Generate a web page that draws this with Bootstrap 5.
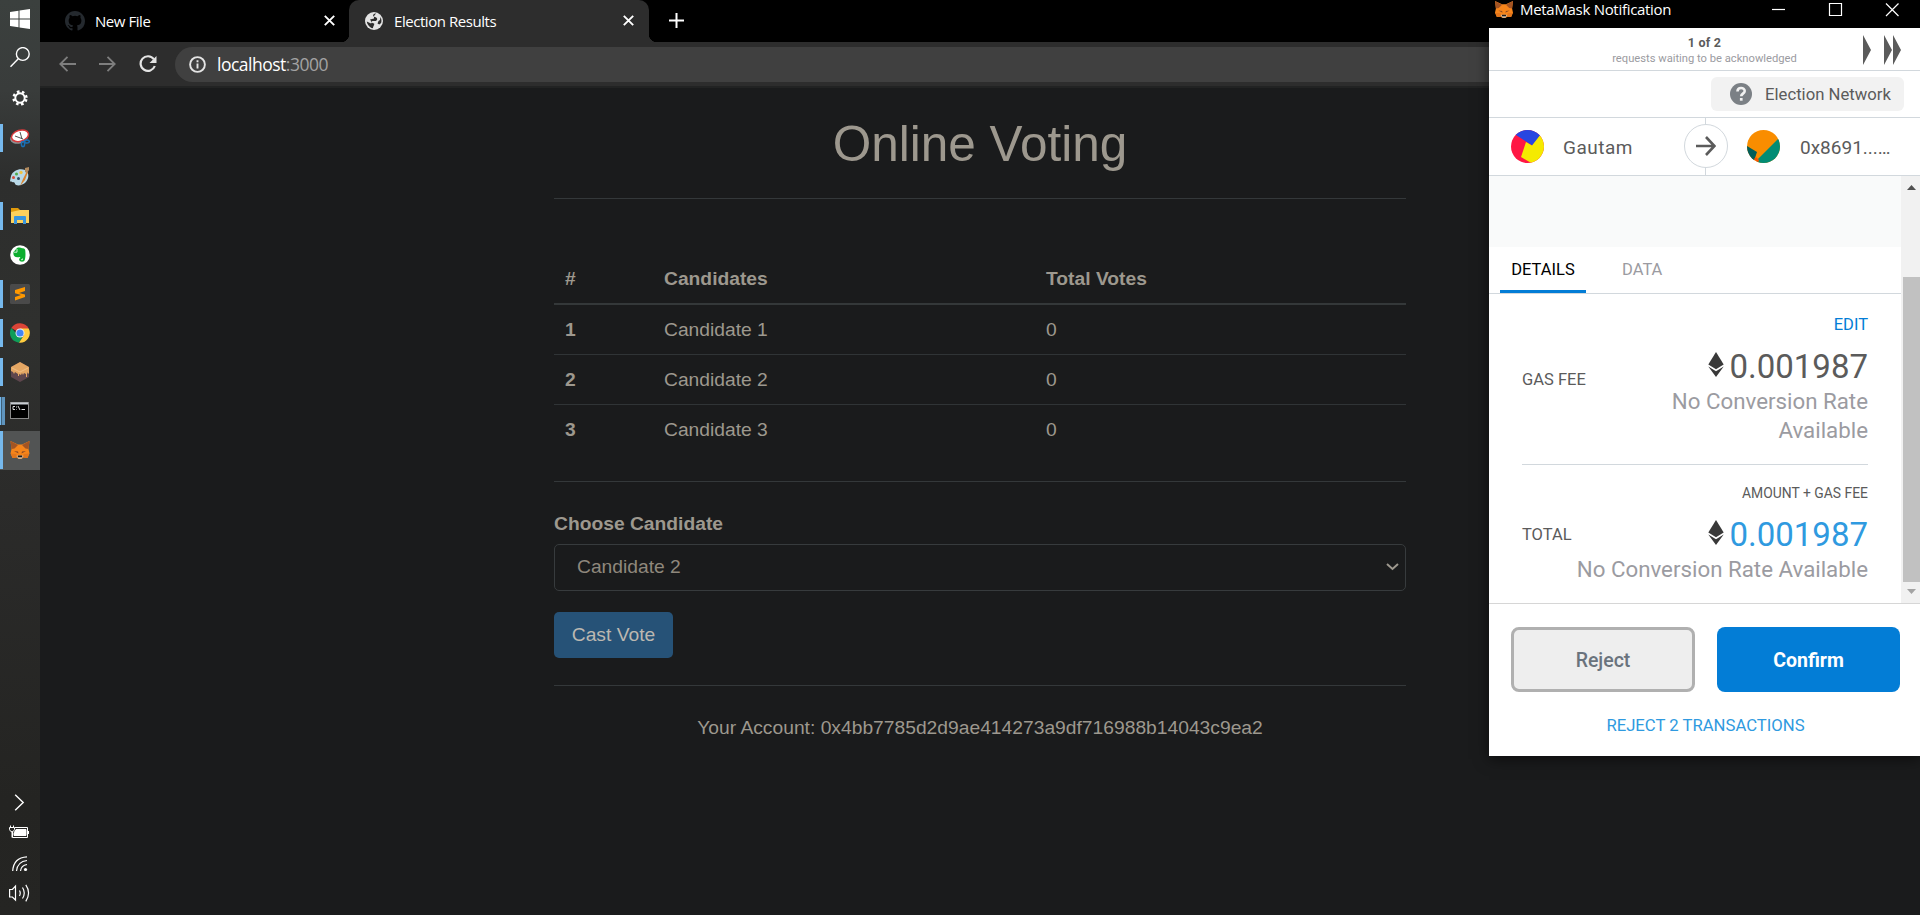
<!DOCTYPE html>
<html lang="en">
<head>
<meta charset="utf-8">
<meta name="viewport" content="width=device-width, initial-scale=1">
<title>Election Results</title>
<link href="https://cdn.jsdelivr.net/npm/bootstrap@5.3.0/dist/css/bootstrap.min.css" rel="stylesheet">
<style>
body{background:#1a1b1c;height:915px;overflow:hidden;font-family:"Liberation Sans",Arial,sans-serif}
svg{display:block;flex:none}
/* taskbar */
.taskbar{width:40px;height:915px;padding:2px 0 8px;background:linear-gradient(#3b403e 0,#393c3b 90px,#2d2e2d 180px,#2f302e 330px,#2b2b2a 500px,#242422 800px,#252523)}
.slot{height:39px;flex:none}
.slot.run::before{content:"";position:absolute;left:0;top:5px;width:3px;height:28px;background:#76b9ed}
.slot.run.multi::after{content:"";position:absolute;left:1px;top:5px;width:4px;height:28px;background:#5f94bd;border-left:1px solid #3e6079}
.slot.run.multi::before{width:1px}
.slot.live{background:#525454}
.slot.live::before{top:0!important;height:38px!important}
/* browser */
.ui{font-family:"Open Sans","Noto Sans",sans-serif;color:#fff}
.tabstrip{height:42px;background:#000}
.tab-item{height:42px;font-size:15px;line-height:40px;letter-spacing:-.45px;padding-bottom:1px}
.tab-on{background:#2d2d2d;border-radius:10px 10px 0 0}
.tab-on::before,.tab-on::after{content:"";position:absolute;bottom:0;width:8px;height:8px}
.tab-on::before{left:-8px;background:radial-gradient(circle at 0 0,transparent 8px,#2d2d2d 8.5px)}
.tab-on::after{right:-8px;background:radial-gradient(circle at 100% 0,transparent 8px,#2d2d2d 8.5px)}
.toolbar{height:46px;background:#2d2d2d;border-bottom:2px solid #222323}
.address{height:35px;background:#404040;border-radius:18px 0 0 18px;font-size:17.5px;line-height:35px;letter-spacing:-.5px}
.dim{color:#a3a3a3}
/* page */
.sheet{width:852px;margin-left:514px;color:#9d988e;font-size:19.25px}
.sheet h1{font-size:49.5px;line-height:54px;margin:29px 0 27px;font-weight:400}
.rule{height:1px;background:#34383a}
.votes{--bs-table-bg:transparent;--bs-table-color:#9d988e;color:#9d988e;border-color:#303436;line-height:27px;margin:53px 0 26px}
.votes th,.votes td{padding:11px 10px 11px 11px;border-bottom:1px solid #303436;height:50px}
.votes thead th{border-bottom:2px solid #343839;height:52px}
.votes tbody tr:last-child>*{border:0}
.pick{height:47px;border:1px solid #373b3d;border-radius:5px;color:#8f887c;padding:0 6px 0 22px}
.cast{height:46px;width:119px;background:#265277;border:0;border-radius:5px;color:#bcb8b1;font-size:19.25px;padding:0;line-height:46px}
/* wallet popup */
.wallet{left:1489px;top:0;width:431px;height:756px;background:#fff;font-family:Roboto,sans-serif;color:#5b5b5b;box-shadow:0 3px 14px rgba(0,0,0,.55)}
.w-title{height:28px;background:#000;font-size:15px;line-height:19px;letter-spacing:-.3px}
.w-line{border-bottom:1px solid #d2d8dd}
.w-queue{height:43px}
.w-net{height:47px}
.net-pill{width:193px;height:34px;background:#f2f2f2;border-radius:6px;font-size:16.7px;line-height:36px}
.w-route{height:58px;font-size:19px}
.w-arrow{left:195px;top:6px;width:44px;height:44px;border:1px solid #d2d8dd;border-radius:50%;background:#fff}
.w-split{left:216px;top:0;width:1px;height:57px;background:#d2d8dd}
.w-body{height:427px}
.w-scroll{width:19px;background:#f1f1f1}
.w-thumb{width:17px;height:305px;background:#c1c1c1}
.w-hero{height:71px;background:#f9fafa}
.w-tabs{height:47px;font-size:16.5px;line-height:45px}
.w-tab-on{width:86px;height:46px;border-bottom:3px solid #037dd6;color:#000}
.lab{font-size:16.5px}
.amount{font-size:33px;line-height:40px}
.muted-rate{font-size:22.3px;line-height:29px;color:#9b9ba1}
.blue{color:#037dd6}.sky{color:#2f9ae0}
.w-btn{height:65px;border-radius:8px;font-size:19.5px;font-weight:500;width:184px}
</style>
</head>
<body>
<div class="d-flex">
  <aside class="taskbar d-flex flex-column justify-content-between">
    <div>
      <div class="slot position-relative" style="padding:7px 0 0 10px"><svg width="20" height="20" fill="#fff"><path d="M0 3 8.500 1.800V9.500H0zM9.500 1.600 20 0v9.500H9.500zM0 10.500h8.500v7.700L0 17zM9.500 10.500H20V20L9.500 18.400z"/></svg></div>
      <div class="slot position-relative" style="padding:6px 0 0 10px"><svg width="20" height="21" fill="none" stroke="#fff" stroke-width="1.400"><circle cx="12.800" cy="7" r="6.400"/><path d="M8.300 11.700 .5 19.800"/></svg></div>
      <div class="slot position-relative" style="padding:10px 0 0 12px"><svg width="16" height="16" viewBox="-8 -8 16 16" stroke="#fff" fill="none"><circle r="4.700" stroke-width="1.900"/><circle r="6.400" stroke-width="2.500" stroke-dasharray="2.500 2.527" transform="rotate(11)"/></svg></div>
      <div class="slot run position-relative" style="padding:10px 0 0 10px"><svg width="20" height="19"><ellipse cx="9" cy="9" rx="9" ry="5.500" fill="#8d9092" transform="rotate(-12 9 9)"/><ellipse cx="10" cy="6.800" rx="8.700" ry="5.500" fill="#fff" stroke="#d9393b" stroke-width="1.500" transform="rotate(-17 10 6.800)"/><path d="m5 7 8 3M10 3l2 7" stroke="#555" stroke-width="1" fill="none"/><g fill="none" stroke="#1970b8" stroke-width="1.500"><ellipse cx="13" cy="15" rx="1.600" ry="2.600"/><ellipse cx="17" cy="12.500" rx="2.300" ry="1.600"/></g></svg></div>
      <div class="slot position-relative" style="padding:9px 0 0 10px"><svg width="20" height="20"><path d="M1 9C3 3 10 1 15 3c5 3 4 9 0 13-4 3-9 3-10 1 0-3-4-1-5-3z" fill="#b9d9e8"/><circle cx="3.500" cy="10.500" r="1.500" fill="#d64c3c"/><circle cx="6.500" cy="7" r="1.500" fill="#52ad4c"/><circle cx="11" cy="5.500" r="1.700" fill="#f0c445"/><circle cx="8.500" cy="11.500" r="1.500" fill="#2c4b65"/><path d="m17 4-4 8-3 7 5-6 3-8z" fill="#d9822d"/><path d="m15 1 4-1v3l-2 3-2-1z" fill="#b18a5e"/></svg></div>
      <div class="slot run position-relative" style="padding:11px 0 0 11px"><svg width="18" height="17"><path d="M0 0h7l2 2h0v3H0z" fill="#e09a0b"/><path d="M0 4 9 2h9v13H0z" fill="#fdd15c"/><path d="M3 16V9q0-1 1-1h10q1 0 1 1v7h-3v-4H6v4z" fill="#3a96dd"/></svg></div>
      <div class="slot position-relative" style="padding:9px 0 0 10px"><svg width="20" height="20"><circle cx="10" cy="10" r="9.800" fill="#fff"/><path d="M3.500 7 7 3c2-.7 4-.4 5 .3 3 .2 3.400 1 3.400 4 .3 4-.2 7-1 8.500-1 1.300-5 1.200-5.300-1 0-1 .5-1.700 1.400-2-.5-.8-1.300-1-1.500-.6C4 13 3 10 3.500 7z" fill="#0cae2f"/><path d="M12.500 13.500v1.200H11M4 7.200h3V4" stroke="#fff" stroke-width=".8" fill="none"/></svg></div>
      <div class="slot run position-relative" style="padding:9px 0 0 10px"><svg width="20" height="20"><rect width="20" height="20" rx="1.500" fill="#4a4a4a"/><path d="m5 6 10-3v4l-6 2 6 1.500V13L5 16.500V13l6-2-6-1.800z" fill="#ff9800"/></svg></div>
      <div class="slot run position-relative" style="padding:9px 0 0 10px"><svg width="20" height="20" viewBox="0 0 20 20"><path d="M10 10 1.300 5A10 9.700 0 0 1 18.700 5.500z" fill="#db4437"/><path d="M10 10h-4L1.300 5A9.800 9.800 0 0 0 9 19.700L13 13z" fill="#0f9d58"/><path d="M10 5.500h8.700A9.800 9.800 0 0 1 9 19.700L14 12z" fill="#ffcd40"/><circle cx="10" cy="10" r="4.500" fill="#f1f1f1"/><circle cx="10" cy="10" r="3.600" fill="#4285f4"/></svg></div>
      <div class="slot run position-relative" style="padding:9px 0 0 11px"><svg width="18" height="20"><path d="m9 0 9 5v10l-9 5-9-5V5z" fill="#5e464d"/><path d="m9 0 9 5v6l-1 1-1-2v5h-1v-3l-2-1-1 2-1-2-1 2-2-1v2H7v-2l-3-2-1 2-1-2-2-1V5z" fill="#e4a663"/><path d="m1 6 8 4 8-4" fill="none" stroke="#f2c48c" stroke-width=".8"/></svg></div>
      <div class="slot run multi position-relative" style="padding:10px 0 0 10px"><svg width="19" height="17"><rect x=".5" y=".5" width="18" height="16" fill="#000" stroke="#8a8a8a"/><path d="M1 1.500h17" stroke="#c8cdd2" stroke-width="2"/><path d="M5 4.500H3v3h2M6.500 4.500v1m0 1.500v.6M8 4l2 4M11.500 7.500H15" stroke="#ddd" fill="none"/></svg></div>
      <div class="slot run live position-relative" style="padding:9px 0 0 10px"><svg width="20" height="20" viewBox="0 0 20 20"><use href="#fox"/></svg></div>
    </div>
    <div>
      <div style="height:30px;padding:7px 0 0 14px"><svg width="11" height="17" fill="none" stroke="#fff" stroke-width="1.400"><path d="m1.200.8 8 7.700-8 7.700"/></svg></div>
      <div style="height:30px;padding:8px 0 0 9px"><svg width="21" height="14" fill="none" stroke="#fff"><path d="M6 2.500h12.500v10H3.500V7"/><path d="M7 4.500h10v6H5V8z" fill="#fff"/><path d="M19.500 6v3M1.500.5v2m3-2v2M.5 2.500h5v2.200l-1.500 2H2L.5 4.700zM3 6.500v6"/></svg></div>
      <div style="height:30px;padding:9px 0 0 12px"><svg width="16" height="16" fill="none" stroke="#fff" stroke-width="1.200"><path d="M.7 15Q1.500 1.500 15 .8M4.500 15Q5.500 5.500 15 4.500M8.500 15Q9 9.500 15 8.500"/><circle cx="13.500" cy="13.500" r="1.600" fill="#fff" stroke="none"/></svg></div>
      <div style="height:30px;padding:7px 0 0 9px"><svg width="21" height="18" fill="none" stroke="#fff" stroke-width="1.200"><path d="M.6 5.500h2.800L6.500 2v14l-3.100-3H.6zM10.500 6.500q1.500 2.500 0 5.500M13.500 3.500q3.500 5.500 0 11M16.800.8q5.500 8 0 16.500"/></svg></div>
    </div>
  </aside>

  <main class="flex-grow-1">
    <div class="tabstrip ui d-flex">
      <div class="tab-item d-flex align-items-center" style="width:309px;padding-left:25px">
        <svg width="20" height="20" viewBox="0 0 16 16" fill="#24292e"><path d="M8 0C3.580 0 0 3.580 0 8c0 3.540 2.290 6.530 5.470 7.590.4.070.55-.17.55-.38 0-.19-.01-.82-.01-1.490-2.010.37-2.530-.49-2.690-.94-.09-.23-.48-.94-.82-1.130-.28-.15-.68-.52-.01-.53.63-.01 1.080.58 1.230.82.72 1.210 1.870.87 2.330.66.07-.52.28-.87.51-1.070-1.780-.2-3.640-.89-3.640-3.950 0-.87.31-1.590.82-2.150-.08-.2-.36-1.020.08-2.120 0 0 .67-.21 2.200.82a7.600 7.600 0 0 1 4 0c1.530-1.040 2.200-.82 2.200-.82.44 1.100.16 1.920.08 2.120.51.56.82 1.270.82 2.150 0 3.070-1.870 3.750-3.650 3.950.29.25.54.73.54 1.480 0 1.070-.01 1.930-.01 2.200 0 .21.15.46.55.38A8 8 0 0 0 16 8c0-4.420-3.580-8-8-8"/></svg>
        <span class="flex-grow-1" style="margin-left:10px">New File</span>
        <svg width="11" height="11" stroke="#fff" stroke-width="1.900" style="margin-right:14px"><path d="m.8.800 9.400 9.400m0-9.400L.8 10.200"/></svg>
      </div>
      <div class="tab-item tab-on position-relative d-flex align-items-center" style="width:300px;padding-left:16px">
        <svg width="18" height="18"><circle cx="9" cy="9" r="9" fill="#e4e4e4"/><path d="M10 1.500c-3 1-2 3 0 3.500s3 2 1.500 3.500-4-.5-4.500 1 1 1.500 2 2-1 3-1 4.500l-1 .2C4 15 2 12 1.800 9.500L6 11.500l1-1-2-3 4-1V4l2-2.500zM15.500 5c1 2 1.300 4 .6 6l-1.800 1.500-1.800-1 1-2.500 1.500-1z" fill="#2d2d2d"/></svg>
        <span class="flex-grow-1" style="margin-left:11px">Election Results</span>
        <svg width="11" height="11" stroke="#fff" stroke-width="1.900" style="margin-right:15px"><path d="m.8.800 9.400 9.400m0-9.400L.8 10.200"/></svg>
      </div>
      <svg width="15" height="15" stroke="#fff" stroke-width="2" style="margin:13px 0 0 20px"><path d="M7.500 0v15M0 7.500h15"/></svg>
    </div>
    <div class="toolbar ui d-flex align-items-center">
      <svg width="18" height="16" fill="none" stroke="#7e7e7e" stroke-width="1.800" style="margin-left:19px"><path d="M17 8H1.500M8.500.8 1.300 8l7.200 7.200"/></svg>
      <svg width="18" height="16" fill="none" stroke="#7e7e7e" stroke-width="1.800" style="margin-left:22px"><path d="M0 8h15.500M8.500.8 15.700 8l-7.200 7.200"/></svg>
      <svg width="19" height="18" fill="none" stroke="#e4e4e4" stroke-width="2.200" style="margin-left:22px"><path d="M14.800 4.200A7.300 7.300 0 1 0 15.800 11"/><path d="M17.500 1v7h-7z" fill="#e4e4e4" stroke="none"/></svg>
      <div class="address flex-grow-1 d-flex align-items-center" style="margin-left:17px;padding-left:14px">
        <svg width="17" height="17" fill="none" stroke="#e4e4e4" stroke-width="1.900"><circle cx="8.500" cy="8.500" r="7.400"/><path d="M8.500 7.500v5M8.500 4.300v2"/></svg>
        <span style="margin-left:11px">localhost<span class="dim">:3000</span></span>
      </div>
    </div>

    <section class="sheet">
      <h1 class="text-center">Online Voting</h1>
      <div class="rule"></div>
      <table class="table votes">
        <colgroup><col style="width:99px"><col style="width:382px"><col></colgroup>
        <thead><tr><th>#</th><th>Candidates</th><th>Total Votes</th></tr></thead>
        <tbody>
          <tr><th>1</th><td>Candidate 1</td><td>0</td></tr>
          <tr><th>2</th><td>Candidate 2</td><td>0</td></tr>
          <tr><th>3</th><td>Candidate 3</td><td>0</td></tr>
        </tbody>
      </table>
      <div class="rule"></div>
      <div class="fw-bold" style="line-height:28px;margin:28px 0 6px">Choose Candidate</div>
      <div class="pick d-flex align-items-center justify-content-between"><span>Candidate 2</span><svg width="13" height="8" fill="none" stroke="#9d988e" stroke-width="2"><path d="m1 1 5.500 5L12 1"/></svg></div>
      <button class="cast btn d-block" style="margin:21px 0 27px">Cast Vote</button>
      <div class="rule"></div>
      <div class="text-center" style="line-height:28px;margin-top:28px">Your Account: 0x4bb7785d2d9ae414273a9df716988b14043c9ea2</div>
    </section>
  </main>
</div>

<div class="wallet position-absolute">
  <div class="w-title ui d-flex">
    <svg width="20" height="19" viewBox="0 0 20 20" style="margin-left:5px">
      <g id="fox"><path d="M.5 1 8 4.500h4L19.500 1 18.500 9l1 4.500-2 4.500-4-.5-2 1.500h-3l-2-1.500-4 .5-2-4.500L1.500 9z" fill="#f6851b"/><path d="M.5 1 8 5 4.500 8.500 1.500 9zM19.500 1 12 5l3.500 3.500 3 .5z" fill="#a35424"/><path d="m4 11 4 .5.5 2zM16 11l-4 .5-.5 2z" fill="#8b4a25"/><path d="m.8 13.500 5.500.5.500 3.500-4.300.5zM19.200 13.500l-5.500.5-.5 3.500 4.300.5z" fill="#e4761b"/><path d="m6.500 16 1.500-.6h4l1.500.6-2 2.800h-3z" fill="#c9bcae"/><path d="M8 15.500h4l.3 1.700H7.700z" fill="#1e1a18"/></g>
    </svg>
    <span class="flex-grow-1" style="margin-left:6px">MetaMask Notification</span>
    <svg width="127" height="17" fill="none" stroke="#fff" stroke-width="1.200" style="margin-right:21px"><path d="M0 9.500h13"/><path d="M57.500 3.500h12v12h-12zM114 3.500l12.500 12.500m0-12.500L114 16"/></svg>
  </div>
  <div class="w-line w-queue position-relative text-center">
    <div class="fw-bold" style="font-size:12.500px;line-height:16px;padding-top:7px;letter-spacing:.2px">1 of 2</div>
    <div style="font-size:11.200px;line-height:15px;color:#9b9ba1">requests waiting to be acknowledged</div>
    <svg class="position-absolute" style="left:374px;top:7px" width="39" height="30" fill="#5b5b5b"><path d="m0 0 8 15-8 15zM21 0l8 15-8 15zM30 0l8 15-8 15z"/></svg>
  </div>
  <div class="w-line w-net d-flex justify-content-end" style="padding:6px 16px 0 0">
    <div class="net-pill d-flex">
      <svg width="22" height="22" viewBox="0 0 22 22" style="margin:6px 13px 0 19px"><circle cx="11" cy="11" r="11" fill="#7b8085"/><path d="M7.500 8.500c0-4.600 7.200-4.400 7.200-.6 0 2.700-3.500 2.700-3.500 5.400" fill="none" stroke="#f2f2f2" stroke-width="2.600"/><path d="M9.900 15h2.700v2.700H9.900z" fill="#f2f2f2"/></svg>
      <span>Election Network</span>
    </div>
  </div>
  <div class="w-line w-route position-relative d-flex align-items-center">
    <div class="w-split position-absolute"></div>
    <div class="w-arrow position-absolute d-flex align-items-center justify-content-center"><svg width="20" height="20" fill="none" stroke="#5b5b5b" stroke-width="2.600"><path d="M0 10h18M10 1l8.500 9L10 19"/></svg></div>
    <svg width="33" height="33" style="margin-left:22px"><clipPath id="c1"><circle cx="16.500" cy="16.500" r="16.500"/></clipPath><g clip-path="url(#c1)"><path d="M0 0h33v33H0z" fill="#ff1744"/><path d="M3 3 16-4l16 6-4 5-6 9L5 5z" fill="#2846e0"/><path d="m15 12 6 3.500L30 4h6v26l-14 4L10 27z" fill="#f5ea00"/></g></svg>
    <span style="margin-left:19px;width:205px;letter-spacing:.5px;padding-top:3px">Gautam</span>
    <svg width="33" height="33" style="margin-left:-21px"><clipPath id="c2"><circle cx="16.500" cy="16.500" r="16.500"/></clipPath><g clip-path="url(#c2)"><path d="M0 0h33v33H0z" fill="#f98d00"/><path d="M33 7v26H9l2-4z" fill="#028c74"/><path d="m0 16 10 6-3 9-7-5z" fill="#015e5a"/><path d="m7 29 2-2 3 3-1 3z" fill="#fc5500"/></g></svg>
    <span style="margin-left:20px;padding-top:3px">0x8691...…</span>
  </div>
  <div class="w-body d-flex">
    <div class="flex-grow-1">
      <div class="w-hero"></div>
      <div class="w-tabs w-line d-flex" style="padding-left:11px"><div class="w-tab-on text-center">DETAILS</div><div style="margin-left:36px;color:#9b9ba1">DATA</div></div>
      <div style="padding:0 33px">
        <div class="w-line d-flex justify-content-between" style="height:171px;padding-top:19px">
          <div class="lab" style="padding-top:55px">GAS FEE</div>
          <div class="text-end" style="width:240px">
            <div class="blue lab" style="line-height:24px">EDIT</div>
            <div class="amount d-flex justify-content-end" style="margin-top:15px"><svg width="16" height="25" viewBox="0 0 16 25" fill="#393939" style="margin:0 5px 0 0"><path d="m8 0 7.700 12.500L8 17.300.3 12.500z"/><path d="M.3 14.500 8 19.300l7.700-4.800L8 25z"/></svg><span style="margin-top:-5px">0.001987</span></div>
            <div class="muted-rate">No Conversion Rate Available</div>
          </div>
        </div>
        <div class="text-end" style="font-size:13.900px;line-height:20px;margin-top:18px">AMOUNT + GAS FEE</div>
        <div class="d-flex justify-content-between" style="margin-top:17px">
          <div class="lab" style="padding-top:3px">TOTAL</div>
          <div class="amount sky d-flex"><svg width="16" height="25" viewBox="0 0 16 25" fill="#393939" style="margin:0 5px 0 0"><path d="m8 0 7.700 12.500L8 17.300.3 12.500z"/><path d="M.3 14.500 8 19.300l7.700-4.800L8 25z"/></svg><span style="margin-top:-5px">0.001987</span></div>
        </div>
        <div class="muted-rate text-end text-nowrap">No Conversion Rate Available</div>
      </div>
    </div>
    <div class="w-scroll d-flex flex-column align-items-end justify-content-between" style="padding:9px 0 9px">
      <svg width="9" height="5" fill="#505050" style="margin-right:4px"><path d="M4.500 0 9 5H0z"/></svg>
      <div class="w-thumb" style="margin-top:80px"></div>
      <svg width="9" height="5" fill="#a3a3a3" style="margin-right:4px"><path d="M0 0h9L4.500 5z"/></svg>
    </div>
  </div>
  <div style="border-top:1px solid #d6d6d6;padding:23px 20px 0 22px">
    <div class="d-flex justify-content-between">
      <button class="w-btn btn" style="border:3px solid #b0b0b0;background:#eee;color:#6a737d;padding:2px 0 0">Reject</button>
      <button class="w-btn btn text-white border-0" style="background:#037dd6;width:183px;font-weight:700;padding:2px 0 0">Confirm</button>
    </div>
    <div class="sky text-center" style="font-size:16.700px;line-height:24px;margin-top:22px">REJECT 2 TRANSACTIONS</div>
  </div>
</div>
<script src="https://cdn.jsdelivr.net/npm/bootstrap@5.3.0/dist/js/bootstrap.bundle.min.js"></script>
</body>
</html>
